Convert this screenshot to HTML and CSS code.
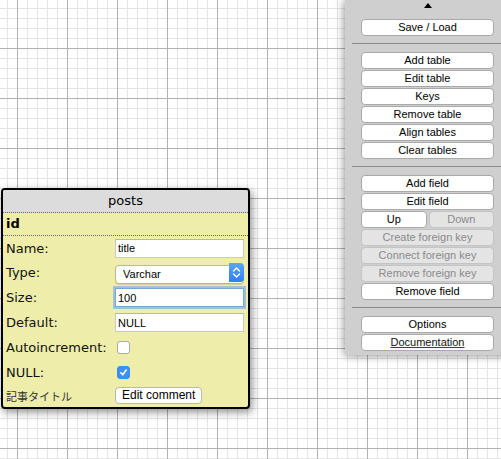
FILE: index.html
```html
<!DOCTYPE html>
<html lang="en">
<head>
    <meta charset="UTF-8">
    <title>WWW SQL Designer</title>
    <link rel="stylesheet" href="styles.css">
</head>
<body>
    <div class="canvas">
        <div class="table-box">
            <div class="table-title">posts</div>
            <div class="table-row-id">id</div>
            <div class="field-form">
                <label class="f-label">Name:</label>
                <input type="text" class="f-input" value="title">

                <label class="f-label">Type:</label>
                <div class="f-select-wrap">
                    <select class="f-select">
                        <option>Varchar</option>
                    </select>
                    <span class="stepper">
                        <svg width="9" height="13" viewBox="0 0 9 13">
                            <path d="M1.5 5 L4.5 2 L7.5 5 M1.5 8 L4.5 11 L7.5 8" fill="none" stroke="#fff" stroke-width="1.4" stroke-linecap="round" stroke-linejoin="round"/>
                        </svg>
                    </span>
                </div>

                <label class="f-label">Size:</label>
                <input type="text" class="f-input focused" value="100">

                <label class="f-label">Default:</label>
                <input type="text" class="f-input" value="NULL">

                <label class="f-label">Autoincrement:</label>
                <span class="check"></span>

                <label class="f-label">NULL:</label>
                <span class="check checked">
                    <svg width="9" height="9" viewBox="0 0 9 9">
                        <path d="M1.8 4.8 L3.7 6.8 L7.2 2" fill="none" stroke="#fff" stroke-width="1.6" stroke-linecap="round" stroke-linejoin="round"/>
                    </svg>
                </span>

                <span class="f-comment">記事タイトル</span>
                <button type="button" class="comment-btn">Edit comment</button>
            </div>
        </div>

        <div class="side-panel">
            <div class="panel-toggle"><span class="arrow-up"></span></div>

            <div class="btn-group">
                <button type="button" class="p-btn">Save / Load</button>
            </div>
            <hr class="sep">
            <div class="btn-group">
                <button type="button" class="p-btn">Add table</button>
                <button type="button" class="p-btn">Edit table</button>
                <button type="button" class="p-btn">Keys</button>
                <button type="button" class="p-btn">Remove table</button>
                <button type="button" class="p-btn">Align tables</button>
                <button type="button" class="p-btn">Clear tables</button>
            </div>
            <hr class="sep">
            <div class="btn-group">
                <button type="button" class="p-btn">Add field</button>
                <button type="button" class="p-btn">Edit field</button>
                <div class="btn-pair">
                    <button type="button" class="p-btn">Up</button>
                    <button type="button" class="p-btn" disabled>Down</button>
                </div>
                <button type="button" class="p-btn" disabled>Create foreign key</button>
                <button type="button" class="p-btn" disabled>Connect foreign key</button>
                <button type="button" class="p-btn" disabled>Remove foreign key</button>
                <button type="button" class="p-btn">Remove field</button>
            </div>
            <hr class="sep">
            <div class="btn-group">
                <button type="button" class="p-btn">Options</button>
                <button type="button" class="p-btn"><a class="doc-link" href="#">Documentation</a></button>
            </div>
        </div>
    </div>
</body>
</html>
```

FILE: styles.css
```css
html, body {
    margin: 0;
    padding: 0;
}
body {
    width: 501px;
    height: 459px;
    overflow: hidden;
    font-family: "DejaVu Sans", Verdana, sans-serif;
}
.canvas {
    position: relative;
    width: 501px;
    height: 459px;
    overflow: hidden;
    background-color: #fff;
    background-image:
        linear-gradient(to right, #b2b2b2 1px, transparent 1px),
        linear-gradient(to bottom, #b2b2b2 1px, transparent 1px),
        linear-gradient(to right, #e4e4e4 1px, transparent 1px),
        linear-gradient(to bottom, #e4e4e4 1px, transparent 1px);
    background-size: 50px 50px, 50px 50px, 10px 10px, 10px 10px;
    background-position: 17px 48px, 17px 48px, 7px 8px, 7px 8px;
}

/* table on the canvas */
.table-box {
    position: absolute;
    left: 1px;
    top: 188px;
    width: 249px;
    box-sizing: border-box;
    border: 2px solid #000;
    border-radius: 4px;
    background: #eeeeaa;
    box-shadow: 2px 3px 8px rgba(0, 0, 0, 0.45);
    overflow: hidden;
}
.table-title {
    height: 22px;
    line-height: 22px;
    text-align: center;
    font-size: 13px;
    background: #dcdcdc;
    border-bottom: 1px dotted #666;
}
.table-row-id {
    height: 22px;
    line-height: 22px;
    padding-left: 3px;
    font-size: 13px;
    font-weight: bold;
    border-bottom: 1px dotted #666;
}
.field-form {
    display: grid;
    grid-template-columns: 109px 129px;
    grid-template-rows: 24px 25px 25px 25px 25px 24px 23px;
    align-items: center;
    padding-left: 3px;
}
.f-label {
    font-size: 13px;
    color: #111;
}
.f-input {
    box-sizing: border-box;
    width: 129px;
    height: 19px;
    margin: 0;
    padding: 0 2px;
    border: 1px solid #c9c9c9;
    border-top-color: #b5b5b5;
    background: #fff;
    font-family: "Liberation Sans", Arial, sans-serif;
    font-size: 11px;
    color: #000;
    outline: none;
}
.f-input.focused {
    border-color: #76a7dc;
    box-shadow: 0 0 0 2px rgba(100, 160, 235, 0.55);
}
.f-select-wrap {
    position: relative;
    width: 129px;
    height: 19px;
}
.f-select {
    appearance: none;
    -webkit-appearance: none;
    box-sizing: border-box;
    width: 129px;
    height: 19px;
    margin: 0;
    padding: 0 0 0 7px;
    border: 1px solid #b9b99a;
    border-radius: 4px;
    background: #fff;
    box-shadow: 0 1px 1px rgba(0, 0, 0, 0.12);
    font-family: "Liberation Sans", Arial, sans-serif;
    font-size: 11px;
    color: #000;
}
.stepper {
    position: absolute;
    right: 0;
    top: 0;
    width: 15px;
    height: 19px;
    border-radius: 0 4px 4px 0;
    background: linear-gradient(#5aa6fb, #2f7ff0);
    display: flex;
    align-items: center;
    justify-content: center;
}
.check {
    box-sizing: border-box;
    width: 13px;
    height: 13px;
    margin-left: 2px;
    border: 1px solid #a9a9a9;
    border-radius: 3px;
    background: #fff;
    display: flex;
    align-items: center;
    justify-content: center;
}
.check.checked {
    border-color: #3a8af2;
    background: #3b91f7;
}
.f-comment {
    font-family: "Noto Sans CJK JP", sans-serif;
    font-size: 11px;
    color: #333;
}
.comment-btn {
    justify-self: start;
    box-sizing: border-box;
    height: 17px;
    padding: 0 6px;
    border: 1px solid #b8b8b8;
    border-radius: 4px;
    background: #fff;
    font-family: "Liberation Sans", Arial, sans-serif;
    font-size: 12px;
    line-height: 15px;
    color: #000;
}

/* control panel */
.side-panel {
    position: absolute;
    left: 345px;
    top: 0;
    width: 165px;
    padding-bottom: 4px;
    background: #cfcfcf;
    box-shadow: 0 0 9px rgba(0, 0, 0, 0.5);
}
.panel-toggle {
    height: 19px;
    display: flex;
    justify-content: center;
    padding-top: 3px;
    box-sizing: border-box;
}
.arrow-up {
    width: 0;
    height: 0;
    border-left: 4px solid transparent;
    border-right: 4px solid transparent;
    border-bottom: 5px solid #000;
}
.btn-group {
    display: flex;
    flex-direction: column;
    gap: 1px;
    width: 133px;
    margin: 0 auto;
}
.btn-pair {
    display: flex;
    gap: 2px;
}
.btn-pair .p-btn {
    flex: 1;
}
.p-btn {
    box-sizing: border-box;
    height: 17px;
    margin: 0;
    padding: 0;
    border: 1px solid #a9a9a9;
    border-radius: 4px;
    background: #fff;
    font-family: "Liberation Sans", Arial, sans-serif;
    font-size: 11px;
    line-height: 15px;
    color: #000;
    text-align: center;
}
.p-btn:disabled {
    background: #e4e4e4;
    border-color: #c4c4c4;
    color: #8a8a8a;
}
.doc-link {
    color: #111;
    text-decoration: underline;
    text-decoration-color: #2233cc;
}
.sep {
    margin: 7px 7px 8px 7px;
    height: 0;
    border: none;
    border-top: 1px solid #8c8c8c;
}
```
